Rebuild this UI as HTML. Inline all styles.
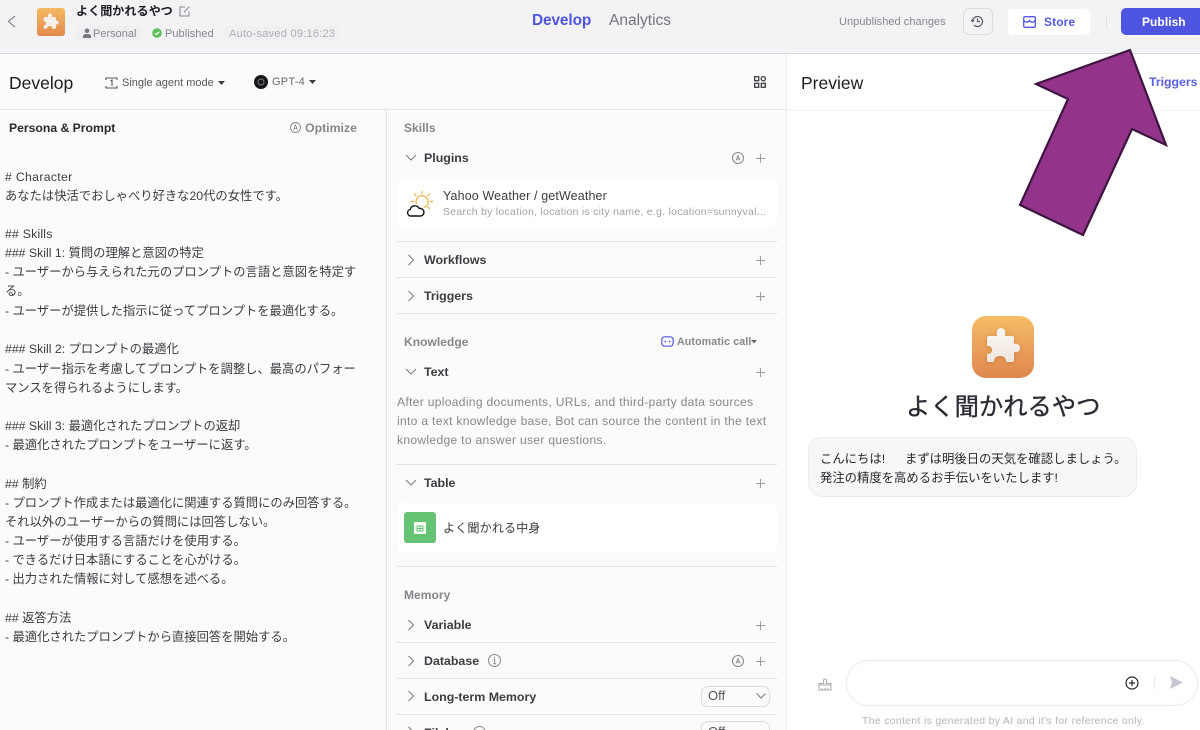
<!DOCTYPE html>
<html lang="ja">
<head>
<meta charset="utf-8">
<title>Develop</title>
<style>
html,body{margin:0;padding:0;background:#fff;width:1200px;height:730px;overflow:hidden}
#p{position:relative;width:1200px;height:730px;overflow:hidden;font-family:"Liberation Sans","Noto Sans CJK JP",sans-serif;color:#1f2329;background:#fff}
.a{position:absolute}
.t{position:absolute;white-space:nowrap;line-height:18px}
.hr{position:absolute;height:1px;background:#e3e3e5;left:397px;width:380px}
.h{font-size:12.4px;font-weight:bold;color:#3b3d42;left:424px;margin-top:1px}
.sec{font-size:12px;font-weight:bold;color:#85878c;left:404px;letter-spacing:.05px;margin-top:1px}
.l{position:absolute;left:5px;font-size:12.3px;line-height:18px;color:#3a3c41;white-space:nowrap;margin-top:1px}
svg{position:absolute;overflow:visible}
</style>
</head>
<body>
<div id="p">
<!-- panel backgrounds -->
<div class="a" style="left:0;top:0;width:1200px;height:53px;background:#f3f3f6;border-bottom:1px solid #dcdcdf"></div>
<div class="a" style="left:0;top:54px;width:786px;height:676px;background:#fbfbfb"></div>
<div class="a" style="left:0;top:109px;width:786px;height:1px;background:#e3e3e5"></div>
<div class="a" style="left:386px;top:110px;width:1px;height:620px;background:#e3e3e5"></div>
<div class="a" style="left:786px;top:54px;width:1px;height:676px;background:#ededef"></div>
<div class="a" style="left:787px;top:110px;width:413px;height:1px;background:#f3f3f5"></div>

<!-- top bar -->
<svg style="left:0;top:0" width="30" height="40"><path d="M15 16 L8.500 21.500 L15 27" fill="none" stroke="#77797e" stroke-width="1.100"/></svg>
<div class="a" style="left:37px;top:8px;width:28px;height:28px;border-radius:3px;background:linear-gradient(#f4b964,#e28a4e)"></div>
<svg style="left:37px;top:8px" width="28" height="28" viewBox="0 0 62 62"><path d="M17 20H25C24 16 25 12 29 12C33 12 34 16 33 20H40Q42 20 42 22V28C44 27 48 28 48 32C48 36 44 37 42 36V44Q42 46 40 46H34C34 42 32 40 28 40C24 40 22 42 22 46H17Q15 46 15 44V38C18 38 20 37 20 34C20 31 18 30 15 30V22Q15 20 17 20Z" fill="#f6efe9"/></svg>
<div class="t" style="left:76px;top:2px;font-size:12.100px;font-weight:bold;color:#1c1d21">よく聞かれるやつ</div>
<svg style="left:179px;top:5px" width="12" height="12" viewBox="0 0 12 12"><path d="M10 6.500V11H1V2h5M5 7 10.500 1.500" fill="none" stroke="#85878c" stroke-width="1"/></svg>
<div class="a" style="left:75px;top:26px;width:67px;height:14px;border-radius:5px;background:#f0f0f3"></div>
<svg style="left:82px;top:28px" width="10" height="10" viewBox="0 0 10 10"><circle cx="5" cy="2.800" r="2.300" fill="#77797e"/><path d="M1 10V8a3 3 0 0 1 3-2h2a3 3 0 0 1 3 2v2z" fill="#77797e"/></svg>
<div class="t" style="left:93px;top:25px;font-size:11px;color:#85878c">Personal</div>
<svg style="left:152px;top:28px" width="10" height="10" viewBox="0 0 10 10"><circle cx="5" cy="5" r="4.800" fill="#5cc356"/><path d="M2.800 5.100 4.400 6.600 7.300 3.700" fill="none" stroke="#fff" stroke-width="1.200"/></svg>
<div class="t" style="left:165px;top:25px;font-size:11px;color:#85878c;letter-spacing:.05px">Published</div>
<div class="a" style="left:224px;top:26px;width:116px;height:14px;border-radius:5px;background:#f0f0f3"></div>
<div class="t" style="left:229px;top:25px;font-size:11px;color:#acaeb2;letter-spacing:.25px">Auto-saved 09:16:23</div>

<div class="t" style="left:532px;top:11px;font-size:15.400px;font-weight:bold;color:#4e55e0;letter-spacing:-.1px;margin-top:1px">Develop</div>
<div class="t" style="left:609px;top:12px;font-size:15.500px;color:#74767b">Analytics</div>

<div class="t" style="left:839px;top:13px;font-size:11px;color:#85878c;letter-spacing:.05px">Unpublished changes</div>
<div class="a" style="left:963px;top:8px;width:28px;height:25px;border:1px solid #dcdcdf;border-radius:6px;background:#f3f3f6"></div>
<svg style="left:971px;top:15px" width="13" height="13" viewBox="0 0 13 13"><path d="M1.500 6.500a5 5 0 1 1 1.500 3.600M6.500 3.500v3.200h2.600M.3 5l1.300 1.600L3 5.200" fill="none" stroke="#55575c" stroke-width="1.200"/></svg>
<div class="a" style="left:1008px;top:9px;width:82px;height:26px;border-radius:4px;background:#fff"></div>
<svg style="left:1023px;top:16px" width="13" height="12" viewBox="0 0 13 12"><path d="M2 .7H11A1.300 1.300 0 0 1 12.300 2V10A1.300 1.300 0 0 1 11 11.300H2A1.300 1.300 0 0 1 .7 10V2A1.300 1.300 0 0 1 2 .7zM.7 4C2 6.800 5 6.800 6.500 4.500 8 6.800 11 6.800 12.300 4" fill="none" stroke="#5258e4" stroke-width="1.300"/></svg>
<div class="t" style="left:1044px;top:13px;font-size:12px;font-weight:bold;color:#5258e4;letter-spacing:.1px">Store</div>
<div class="a" style="left:1106px;top:15px;width:1px;height:14px;background:#e3e3e5"></div>
<div class="a" style="left:1121px;top:8px;width:90px;height:27px;border-radius:5px;background:#4e55e0"></div>
<div class="t" style="left:1142px;top:13px;font-size:12px;font-weight:bold;color:#fff;letter-spacing:.05px">Publish</div>

<!-- Develop header -->
<div class="t" style="left:9px;top:74px;font-size:17.500px;color:#1c1d21">Develop</div>
<svg style="left:105px;top:77px" width="13" height="12" viewBox="0 0 13 12"><path d="M1 3V1h11v2M1 9v2h11V9M5.500 4 7 3v6" fill="none" stroke="#55575c" stroke-width="1.100"/></svg>
<div class="t" style="left:122px;top:74px;font-size:11px;color:#55575c">Single agent mode</div>
<svg style="left:218px;top:81px" width="7" height="4"><path d="M0 0h7L3.500 4z" fill="#3b3d42"/></svg>
<div class="a" style="left:254px;top:75px;width:14px;height:14px;border-radius:50%;background:#16171a"></div>
<svg style="left:257px;top:78px" width="8" height="8"><circle cx="4" cy="4" r="3" fill="none" stroke="#77797e" stroke-width="1"/></svg>
<div class="t" style="left:272px;top:73px;font-size:11px;color:#6a6c71;letter-spacing:.25px">GPT-4</div>
<svg style="left:309px;top:80px" width="7" height="4"><path d="M0 0h7L3.500 4z" fill="#3b3d42"/></svg>
<svg style="left:754px;top:76px" width="12" height="12" viewBox="0 0 12 12"><g fill="none" stroke="#3b3d42" stroke-width="1.300"><rect x=".7" y=".7" width="4" height="4"/><rect x=".7" y="7.300" width="4" height="4"/><rect x="7.300" y="7.300" width="4" height="4"/><circle cx="9.300" cy="2.700" r="2.100"/></g></svg>

<!-- Persona column -->
<div class="t" style="left:9px;top:119px;font-size:12.200px;font-weight:bold;color:#26282c">Persona &amp; Prompt</div>
<svg style="left:290px;top:122px" width="11" height="11" viewBox="0 0 11 11"><circle cx="5.500" cy="5.500" r="5" fill="none" stroke="#85878c" stroke-width=".9"/><path d="M3.500 8 5.500 3l2 5M4.200 6.500h2.600" fill="none" stroke="#85878c" stroke-width=".8"/></svg>
<div class="t" style="left:305px;top:119px;font-size:12.300px;font-weight:bold;color:#85878c">Optimize</div>

<div class="l" style="top:167px;letter-spacing:.3px"># Character</div>
<div class="l" style="top:186px">あなたは快活でおしゃべり好きな20代の女性です。</div>
<div class="l" style="top:224px;letter-spacing:.2px">## Skills</div>
<div class="l" style="top:243px">### Skill 1: 質問の理解と意図の特定</div>
<div class="l" style="top:262px">- ユーザーから与えられた元のプロンプトの言語と意図を特定す</div>
<div class="l" style="top:281px">る。</div>
<div class="l" style="top:301px">- ユーザーが提供した指示に従ってプロンプトを最適化する。</div>
<div class="l" style="top:339px">### Skill 2: プロンプトの最適化</div>
<div class="l" style="top:359px">- ユーザー指示を考慮してプロンプトを調整し、最高のパフォー</div>
<div class="l" style="top:378px">マンスを得られるようにします。</div>
<div class="l" style="top:416px">### Skill 3: 最適化されたプロンプトの返却</div>
<div class="l" style="top:435px">- 最適化されたプロンプトをユーザーに返す。</div>
<div class="l" style="top:474px">## 制約</div>
<div class="l" style="top:493px">- プロンプト作成または最適化に関連する質問にのみ回答する。</div>
<div class="l" style="top:512px">それ以外のユーザーからの質問には回答しない。</div>
<div class="l" style="top:531px">- ユーザーが使用する言語だけを使用する。</div>
<div class="l" style="top:550px">- できるだけ日本語にすることを心がける。</div>
<div class="l" style="top:569px">- 出力された情報に対して感想を述べる。</div>
<div class="l" style="top:608px">## 返答方法</div>
<div class="l" style="top:627px">- 最適化されたプロンプトから直接回答を開始する。</div>

<!-- Skills column -->
<div class="t sec" style="top:118px">Skills</div>
<svg style="left:405px;top:154px" width="12" height="8"><path d="M1 1 6 6 11 1" fill="none" stroke="#77797e" stroke-width="1"/></svg>
<div class="t h" style="top:148px">Plugins</div>
<svg style="left:732px;top:152px" width="12" height="12" viewBox="0 0 12 12"><circle cx="6" cy="6" r="5.500" fill="none" stroke="#85878c" stroke-width="1"/><path d="M4 8.500 6 3.500l2 5M4.700 7h2.600" fill="none" stroke="#85878c" stroke-width=".9"/></svg>
<svg style="left:756px;top:154px" width="9" height="9"><path d="M4.500 0v9M0 4.500h9" stroke="#9a9ca0" stroke-width="1"/></svg>

<div class="a" style="left:397px;top:179px;width:380px;height:48px;background:#fff;border-radius:7px"></div>
<svg style="left:407px;top:190px" width="27" height="28" viewBox="0 0 27 28"><g fill="none" stroke="#f4b142" stroke-width="1.200"><path d="M9.500 14a6 6 0 1 1 7 3.500"/><path d="M15 1v3M7 3.500l2.500 2.500M23 3.500 20.500 6M4 11.500h3M26 11.500h-3M23 19l-2.500-2.500"/></g><path d="M3.500 26a3.300 3.300 0 0 1-.3-6.500 4.800 4.800 0 0 1 9-1A3.800 3.800 0 0 1 14 26z" fill="#fff" stroke="#111" stroke-width="1.400"/></svg>
<div class="t" style="left:443px;top:187px;font-size:12.500px;color:#3b3d42;letter-spacing:.13px">Yahoo Weather / getWeather</div>
<div class="t" style="left:443px;top:203px;font-size:10.500px;color:#a0a2a6;letter-spacing:.26px">Search by location, location is city name, e.g. location=sunnyval...</div>

<div class="hr" style="top:241px"></div>
<svg style="left:407px;top:254px" width="8" height="12"><path d="M1.500 1 6.500 6 1.500 11" fill="none" stroke="#77797e" stroke-width="1"/></svg>
<div class="t h" style="top:250px">Workflows</div>
<svg style="left:756px;top:256px" width="9" height="9"><path d="M4.500 0v9M0 4.500h9" stroke="#9a9ca0" stroke-width="1"/></svg>
<div class="hr" style="top:277px"></div>
<svg style="left:407px;top:290px" width="8" height="12"><path d="M1.500 1 6.500 6 1.500 11" fill="none" stroke="#77797e" stroke-width="1"/></svg>
<div class="t h" style="top:286px">Triggers</div>
<svg style="left:756px;top:292px" width="9" height="9"><path d="M4.500 0v9M0 4.500h9" stroke="#9a9ca0" stroke-width="1"/></svg>
<div class="hr" style="top:313px"></div>

<div class="t sec" style="top:332px">Knowledge</div>
<svg style="left:661px;top:336px" width="13" height="11" viewBox="0 0 13 11"><rect x=".8" y=".8" width="11.400" height="9.400" rx="3" fill="none" stroke="#5258e4" stroke-width="1.200"/><circle cx="4.300" cy="5.500" r=".9" fill="#5258e4"/><circle cx="8.700" cy="5.500" r=".9" fill="#5258e4"/></svg>
<div class="t" style="left:677px;top:333px;font-size:10.600px;font-weight:bold;color:#85878c;letter-spacing:.15px">Automatic call</div>
<svg style="left:751px;top:340px" width="6" height="4"><path d="M0 0h6L3 3.500z" fill="#66686d"/></svg>

<svg style="left:405px;top:368px" width="12" height="8"><path d="M1 1 6 6 11 1" fill="none" stroke="#77797e" stroke-width="1"/></svg>
<div class="t h" style="top:362px">Text</div>
<svg style="left:756px;top:368px" width="9" height="9"><path d="M4.500 0v9M0 4.500h9" stroke="#9a9ca0" stroke-width="1"/></svg>
<div class="t" style="left:397px;top:393px;font-size:12.100px;color:#85878c;letter-spacing:.3px">After uploading documents, URLs, and third-party data sources</div>
<div class="t" style="left:397px;top:412px;font-size:12.100px;color:#85878c;letter-spacing:.3px">into a text knowledge base, Bot can source the content in the text</div>
<div class="t" style="left:397px;top:431px;font-size:12.100px;color:#85878c;letter-spacing:.3px">knowledge to answer user questions.</div>
<div class="hr" style="top:464px"></div>

<svg style="left:405px;top:479px" width="12" height="8"><path d="M1 1 6 6 11 1" fill="none" stroke="#77797e" stroke-width="1"/></svg>
<div class="t h" style="top:473px">Table</div>
<svg style="left:756px;top:479px" width="9" height="9"><path d="M4.500 0v9M0 4.500h9" stroke="#9a9ca0" stroke-width="1"/></svg>
<div class="a" style="left:397px;top:503px;width:380px;height:49px;background:#fff;border-radius:7px"></div>
<div class="a" style="left:404px;top:512px;width:32px;height:31px;background:#66c374;border-radius:3px"></div>
<svg style="left:413px;top:521px" width="14" height="14" viewBox="0 0 14 14"><path d="M2 1h10a1 1 0 0 1 1 1v11H2a1 1 0 0 1-1-1V2a1 1 0 0 1 1-1z" fill="#f4fbf5"/><path d="M4 5h6v5H4zM7 5v5M4 7.500h6" fill="none" stroke="#66c374" stroke-width=".9"/></svg>
<div class="t" style="left:443px;top:519px;font-size:12.200px;color:#3b3d42">よく聞かれる中身</div>
<div class="hr" style="top:566px"></div>

<div class="t sec" style="top:585px">Memory</div>
<svg style="left:407px;top:619px" width="8" height="12"><path d="M1.500 1 6.500 6 1.500 11" fill="none" stroke="#77797e" stroke-width="1"/></svg>
<div class="t h" style="top:615px">Variable</div>
<svg style="left:756px;top:621px" width="9" height="9"><path d="M4.500 0v9M0 4.500h9" stroke="#9a9ca0" stroke-width="1"/></svg>
<div class="hr" style="top:642px"></div>
<svg style="left:407px;top:655px" width="8" height="12"><path d="M1.500 1 6.500 6 1.500 11" fill="none" stroke="#77797e" stroke-width="1"/></svg>
<div class="t h" style="top:651px">Database</div>
<svg style="left:488px;top:654px" width="13" height="13" viewBox="0 0 13 13"><circle cx="6.500" cy="6.500" r="6" fill="none" stroke="#85878c" stroke-width="1"/><path d="M5.500 5.500h1.200v4M5.300 9.700h2.600M6.500 3v1.200" fill="none" stroke="#85878c" stroke-width="1"/></svg>
<svg style="left:732px;top:655px" width="12" height="12" viewBox="0 0 12 12"><circle cx="6" cy="6" r="5.500" fill="none" stroke="#85878c" stroke-width="1"/><path d="M4 8.500 6 3.500l2 5M4.700 7h2.600" fill="none" stroke="#85878c" stroke-width=".9"/></svg>
<svg style="left:756px;top:657px" width="9" height="9"><path d="M4.500 0v9M0 4.500h9" stroke="#9a9ca0" stroke-width="1"/></svg>
<div class="hr" style="top:678px"></div>
<svg style="left:407px;top:690px" width="8" height="12"><path d="M1.500 1 6.500 6 1.500 11" fill="none" stroke="#77797e" stroke-width="1"/></svg>
<div class="t h" style="top:687px">Long-term Memory</div>
<div class="a" style="left:701px;top:686px;width:67px;height:19px;border:1px solid #dcdcdf;border-radius:7px;background:#fbfbfb"></div>
<div class="t" style="left:708px;top:687px;font-size:13px;color:#55575c">Off</div>
<svg style="left:756px;top:693px" width="10" height="6"><path d="M.5 .5 5 5 9.500 .5" fill="none" stroke="#77797e" stroke-width="1"/></svg>
<div class="hr" style="top:714px"></div>
<svg style="left:407px;top:726px" width="8" height="12"><path d="M1.500 1 6.500 6 1.500 11" fill="none" stroke="#77797e" stroke-width="1"/></svg>
<div class="t h" style="top:723px">Filebox</div>
<svg style="left:473px;top:726px" width="13" height="13" viewBox="0 0 13 13"><circle cx="6.500" cy="6.500" r="6" fill="none" stroke="#85878c" stroke-width="1"/></svg>
<div class="a" style="left:701px;top:721px;width:67px;height:19px;border:1px solid #dcdcdf;border-radius:7px;background:#fbfbfb"></div>
<div class="t" style="left:708px;top:723px;font-size:13px;color:#55575c">Off</div>

<!-- Preview -->
<div class="t" style="left:801px;top:74px;font-size:17.500px;color:#1c1d21">Preview</div>
<div class="t" style="left:1149px;top:73px;font-size:12.300px;font-weight:bold;color:#5a60e6">Triggers</div>

<div class="a" style="left:972px;top:316px;width:62px;height:62px;border-radius:14px;background:linear-gradient(#f5bd66,#e0864f)"></div>
<svg style="left:972px;top:316px;filter:drop-shadow(0 1px 2px rgba(150,80,30,.35))" width="62" height="62" viewBox="0 0 62 62"><defs><linearGradient id="g" x1="0" y1="0" x2="0" y2="1"><stop offset="0" stop-color="#fbf7f3"/><stop offset="1" stop-color="#eee5df"/></linearGradient></defs><path d="M17 20H25C24 16 25 12 29 12C33 12 34 16 33 20H40Q42 20 42 22V28C44 27 48 28 48 32C48 36 44 37 42 36V44Q42 46 40 46H34C34 42 32 40 28 40C24 40 22 42 22 46H17Q15 46 15 44V38C18 38 20 37 20 34C20 31 18 30 15 30V22Q15 20 17 20Z" fill="url(#g)"/></svg>
<div class="t" style="left:906px;top:392px;margin-top:-1px;padding-top:3px;font-size:24.300px;line-height:28px;color:#2a2c33;-webkit-text-stroke:.35px #2a2c33">よく聞かれるやつ</div>
<div class="a" style="left:808px;top:437px;width:327px;height:58px;border:1px solid #ececee;border-radius:14px;background:#f7f7f8"></div>
<div class="t" style="left:820px;top:450px;font-size:12.350px;color:#26282c">こんにちは!</div>
<div class="t" style="left:905px;top:450px;font-size:12.350px;color:#26282c">まずは明後日の天気を確認しましょう。</div>
<div class="t" style="left:820px;top:469px;font-size:12.350px;color:#26282c">発注の精度を高めるお手伝いをいたします!</div>

<svg style="left:818px;top:677px" width="14" height="14" viewBox="0 0 14 14"><path d="M1 8V6.500h4.500V3.500a1.500 1.500 0 0 1 3 0v3H13V8zM1 8v5h12V8M4 11v2M7 11v2M10 11v2" fill="none" stroke="#a7a9ad" stroke-width="1"/></svg>
<div class="a" style="left:846px;top:660px;width:350px;height:44px;border:1px solid #ececee;border-radius:24px;background:#fff"></div>
<svg style="left:1125px;top:676px" width="14" height="14" viewBox="0 0 14 14"><circle cx="7" cy="7" r="6" fill="none" stroke="#26282c" stroke-width="1.200"/><path d="M7 4v6M4 7h6" stroke="#26282c" stroke-width="1.200"/></svg>
<div class="a" style="left:1154px;top:677px;width:1px;height:12px;background:#ececee"></div>
<svg style="left:1170px;top:676px" width="13" height="13" viewBox="0 0 13 13"><path d="M0 0 13 6.500 0 13 2 6.500z" fill="#c6c6d2"/></svg>
<div class="t" style="left:862px;top:712px;font-size:10.500px;color:#b3b5b9;letter-spacing:.3px">The content is generated by AI and it's for reference only.</div>

<!-- arrow annotation -->
<svg style="left:0;top:0" width="1200" height="730"><path d="M1130 50 1036 84 1068 99 1020 205 1083 235 1132 129 1166 145z" fill="#93348a" stroke="#3e1440" stroke-width="2.200" stroke-linejoin="miter"/></svg>
</div>
</body>
</html>
